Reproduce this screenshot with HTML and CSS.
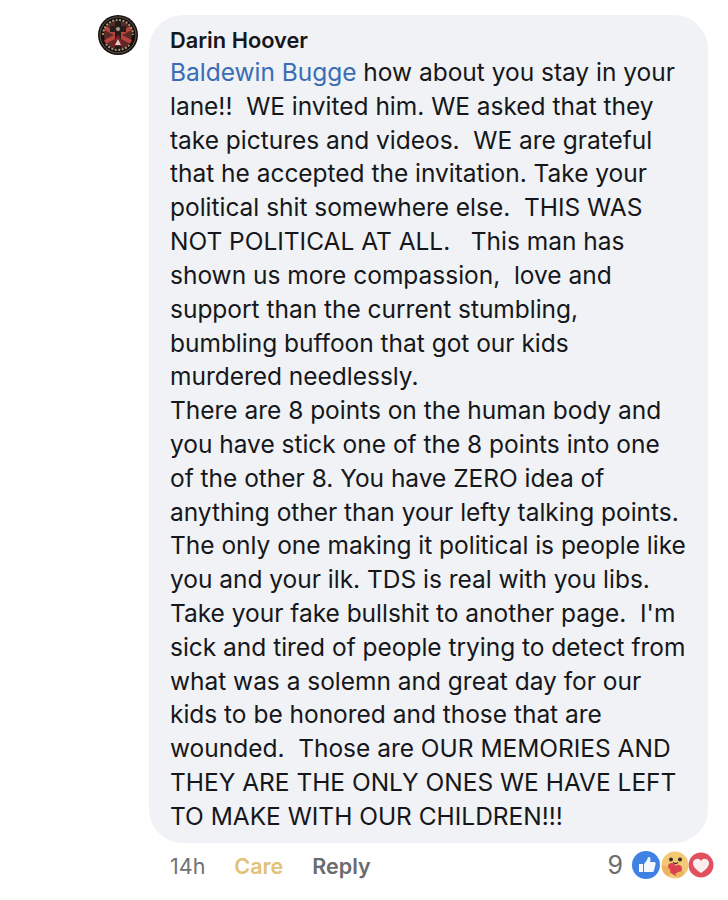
FILE: index.html
```html
<!DOCTYPE html>
<html lang="en">
<head>
<meta charset="utf-8">
<title>Comment</title>
<link rel="stylesheet" href="styles.css">
</head>
<body>
<div class="comment">
  <svg class="avatar" viewBox="0 0 40 40" aria-hidden="true">
    <circle cx="20" cy="20" r="20" fill="#15100f"/>
    <circle cx="20" cy="20" r="18" fill="none" stroke="#6d5a4a" stroke-width="1"/>
    <circle cx="20" cy="20" r="14" fill="#5a2a26"/>
    <path d="M7 13 33 27M7 27 33 13" stroke="#b8443a" stroke-width="4"/>
    <path d="M20 6v28" stroke="#221a1a" stroke-width="6"/>
    <path d="M12 11h16v6H12z" fill="#2a1d1d"/>
    <path d="M20 19 27 31H13z" fill="#7a1f24"/>
    <path d="M20 24 23 30H17z" fill="#d8cfc0"/>
    <circle cx="20" cy="14" r="2" fill="#a89a8a"/>
    <path d="M5 20a15 15 0 0 1 30 0M8 29a15 15 0 0 0 24 0" fill="none" stroke="#a89478" stroke-width="2" stroke-dasharray="2 1.5"/>
  </svg>
  <div class="main">
    <div class="bubble">
      <div class="author">Darin Hoover</div>
      <div class="body">
        <div><a class="mention">Baldewin Bugge</a> how about you stay in your</div>
        <div>lane!!&nbsp; WE invited him. WE asked that they</div>
        <div>take pictures and videos.&nbsp; WE are grateful</div>
        <div>that he accepted the invitation. Take your</div>
        <div>political shit somewhere else.&nbsp; THIS WAS</div>
        <div>NOT POLITICAL AT ALL.&nbsp;&nbsp; This man has</div>
        <div>shown us more compassion,&nbsp; love and</div>
        <div>support than the current stumbling,</div>
        <div>bumbling buffoon that got our kids</div>
        <div>murdered needlessly.</div>
        <div>There are 8 points on the human body and</div>
        <div>you have stick one of the 8 points into one</div>
        <div>of the other 8. You have ZERO idea of</div>
        <div>anything other than your lefty talking points.</div>
        <div>The only one making it political is people like</div>
        <div>you and your ilk. TDS is real with you libs.</div>
        <div>Take your fake bullshit to another page.&nbsp; I'm</div>
        <div>sick and tired of people trying to detect from</div>
        <div>what was a solemn and great day for our</div>
        <div>kids to be honored and those that are</div>
        <div>wounded.&nbsp; Those are OUR MEMORIES AND</div>
        <div>THEY ARE THE ONLY ONES WE HAVE LEFT</div>
        <div>TO MAKE WITH OUR CHILDREN!!!</div>
      </div>
    </div>
    <div class="actions">
      <span class="time">14h</span>
      <span class="care">Care</span>
      <span class="reply">Reply</span>
      <div class="reactions">
        <span class="count">9</span>
        <svg class="react-icons" viewBox="0 0 82 28" aria-hidden="true">
          <circle cx="69" cy="14" r="12.500" fill="#e0505f"/>
          <path d="M69 22c-6-4-8-7-8-10a4.300 4.300 0 0 1 8-2 4.300 4.300 0 0 1 8 2c0 3-2 6-8 10z" fill="#fbeeee"/>
          <circle cx="43" cy="14" r="13.500" fill="#f3c877"/>
          <circle cx="39" cy="8.500" r="2" fill="#3a2a20"/>
          <circle cx="48" cy="8.500" r="2" fill="#3a2a20"/>
          <path d="M41 11.500q2.500 2 5 0" fill="none" stroke="#3a2a20" stroke-width="1.300"/>
          <path d="M44 25c-6-3-8-5-8-9a3.800 3.800 0 0 1 7.500-1 3.800 3.800 0 0 1 6.500 2.500c0 3-2 5.500-6 7.500z" fill="#d9434f"/>
          <path d="M30 14c3 0 7 2 8 5s0 6-2 6c-3 0-7-6-6-11z" fill="#eeb35e"/>
          <path d="M52 20c-3 0-7 1-9 3l3 3c3 0 6-2 6-6z" fill="#eeb35e"/>
          <circle cx="14" cy="14" r="14" fill="#3f82e4"/>
          <path d="M7 13h4v8H7zM12 13l3-4c.500-1.500 .500-3 2-3s2 2 1 5h4c1.500 0 2 1.500 1.500 2.500l-1.500 6c-.300 1-1 1.500-2 1.500h-8z" fill="#f4f8fe"/>
        </svg>
      </div>
    </div>
  </div>
</div>
</body>
</html>
```
FILE: styles.css
```css
html, body {
  margin: 0;
  padding: 0;
  background: #ffffff;
}
body {
  width: 728px;
  height: 900px;
  overflow: hidden;
  font-family: Inter, "Liberation Sans", sans-serif;
  color: #16171a;
}
.comment {
  display: flex;
  align-items: flex-start;
  gap: 11px;
  padding: 15px 20px 0 98px;
}
.avatar {
  width: 40px;
  height: 40px;
  flex: none;
}
.main {
  flex: 1;
  min-width: 0;
}
.bubble {
  background: #f0f2f6;
  border-radius: 34px;
  height: 828px;
  box-sizing: border-box;
  padding: 11px 0 0 21px;
}
.author {
  font-size: 21.800px;
  font-weight: 600;
  line-height: 28px;
  margin-bottom: 2px;
}
.body {
  font-size: 24.500px;
  line-height: 33.820px;
  white-space: nowrap;
  letter-spacing: -0.020px;
}
.mention {
  color: #3a6db5;
}
.actions {
  display: flex;
  align-items: center;
  height: 46px;
  padding-left: 21px;
  font-size: 21.500px;
  color: #6a6b6d;
}
.time {
  color: #6f7175;
}
.care {
  margin-left: 29px;
  font-weight: 600;
  color: #e2c176;
}
.reply {
  margin-left: 29px;
  font-weight: 600;
}
.reactions {
  margin-left: auto;
  margin-right: -6px;
  display: flex;
  align-items: center;
  gap: 9px;
  margin-top: -3px;
}
.count {
  font-size: 25px;
  color: #6b6d70;
}
.react-icons {
  width: 82px;
  height: 28px;
  display: block;
}
```
